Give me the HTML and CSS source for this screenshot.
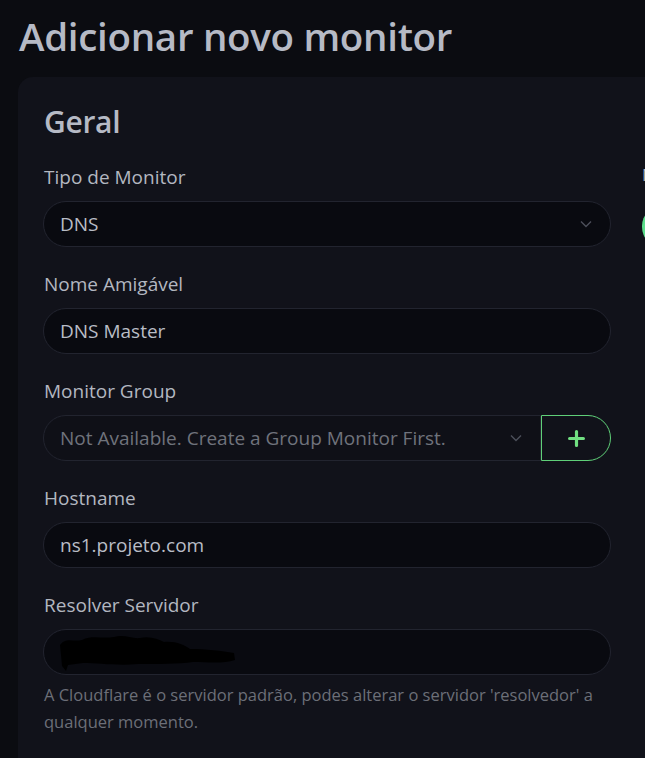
FILE: index.html
```html
<!DOCTYPE html>
<html lang="pt">
<head>
<meta charset="utf-8">
<title>Adicionar novo monitor</title>
<link rel="stylesheet" href="styles.css">
</head>
<body>
<div class="page">
  <h1 class="page-title">Adicionar novo monitor</h1>
  <div class="card">
    <div class="col">
      <h2 class="section-title">Geral</h2>

      <div class="field">
        <label class="label">Tipo de Monitor</label>
        <div class="input select"><span>DNS</span>
          <svg class="chev" viewBox="0 0 12 8" width="12" height="8"><path d="M1 1.5 6 6.5 11 1.5" fill="none" stroke="currentColor" stroke-width="1.4"/></svg>
        </div>
      </div>

      <div class="field">
        <label class="label">Nome Amigável</label>
        <div class="input"><span>DNS Master</span></div>
      </div>

      <div class="field">
        <label class="label">Monitor Group</label>
        <div class="group-row">
          <div class="input select joined"><span class="muted">Not Available. Create a Group Monitor First.</span>
            <svg class="chev" viewBox="0 0 12 8" width="12" height="8"><path d="M1 1.5 6 6.5 11 1.5" fill="none" stroke="currentColor" stroke-width="1.4"/></svg>
          </div>
          <div class="add-btn">
            <svg viewBox="0 0 16 16" width="17" height="17"><path d="M8 1.5v13M1.5 8h13" stroke="currentColor" stroke-width="3" stroke-linecap="round"/></svg>
          </div>
        </div>
      </div>

      <div class="field">
        <label class="label">Hostname</label>
        <div class="input"><span>ns1.projeto.com</span></div>
      </div>

      <div class="field">
        <label class="label">Resolver Servidor</label>
        <div class="input redacted">
          <svg class="scribble" viewBox="0 0 180 40" width="180" height="40"><path d="M2 12 C8 4 14 9 24 7 C34 2 44 6 56 4 C66 1 74 6 82 5 C92 3 100 6 106 9 C118 8 126 12 132 16 C148 16 164 18 176 20 L177 27 C165 31 150 29 135 29 C120 31 100 31 80 31 C60 33 40 30 25 30 L10 32 L8 38 L4 33 L3 22 Z" fill="#000"/></svg>
        </div>
        <p class="help">A Cloudflare é o servidor padrão, podes alterar o servidor 'resolvedor' a qualquer momento.</p>
      </div>
    </div>

    <div class="col">
      <h2 class="section-title">Notificações</h2>
      <p class="note">Não existem notificações disponíveis.</p>
      <div class="btn-green">Configurar Notificação</div>
    </div>
  </div>
</div>
</body>
</html>
```

FILE: styles.css
```css
* { box-sizing: border-box; }
html, body {
  margin: 0;
  padding: 0;
  background: #0b0c11;
  overflow: hidden;
}
body {
  font-family: "Open Sans", "Noto Sans", sans-serif;
  color: #b9bdc7;
  width: 645px;
  height: 758px;
}
.page {
  padding: 8px 0 0 18px;
  width: 1300px;
}
.page-title {
  margin: 0 0 0 1px;
  font-size: 38.5px;
  font-weight: 600;
  line-height: 56px;
  color: #b6bac5;
  letter-spacing: -0.3px;
}
.card {
  margin-top: 13px;
  background: #11121a;
  border-radius: 15px;
  padding: 22px 25px 30px 25px;
  display: grid;
  grid-template-columns: 568px 568px;
  column-gap: 31px;
  min-height: 700px;
}
.section-title {
  margin: 1px 0 19px 1px;
  font-size: 30px;
  font-weight: 600;
  line-height: 44px;
  color: #b6bac5;
  letter-spacing: -0.3px;
}
.field { margin-bottom: 23px; }
.label {
  display: block;
  font-size: 19px;
  line-height: 28px;
  margin: 0 0 10px 1px;
  color: #b3b7c0;
}
.input {
  height: 46px;
  border: 1px solid #22242f;
  background: #090a10;
  border-radius: 23px;
  padding: 0 16px;
  display: flex;
  align-items: center;
  font-size: 19px;
  color: #b9bdc6;
}
.input span { flex: 1; white-space: nowrap; overflow: hidden; }
.select .chev { color: #4c4f5a; margin-right: 2px; }
.muted { color: #6f737c; }
.group-row { display: flex; }
.joined {
  flex: 1;
  border-radius: 23px 0 0 23px;
  background: #0f1017;
  border-color: #22242f;
}
.add-btn {
  width: 70px;
  height: 46px;
  border: 1px solid #5fcf78;
  border-radius: 0 23px 23px 0;
  display: flex;
  align-items: center;
  justify-content: center;
  color: #71e082;
}
.redacted { position: relative; }
.scribble { position: absolute; left: 14px; top: 3px; }
.help {
  margin: 6px 0 0 1px;
  font-size: 16.5px;
  line-height: 27px;
  color: #6c6f78;
}
.note {
  margin: 0 0 20px;
  font-size: 17px;
  color: #b3b7c0;
}
.btn-green {
  display: inline-block;
  background: #5cdd8b;
  color: #0b0c11;
  border-radius: 20px;
  padding: 9px 20px;
  font-size: 17px;
}
```
